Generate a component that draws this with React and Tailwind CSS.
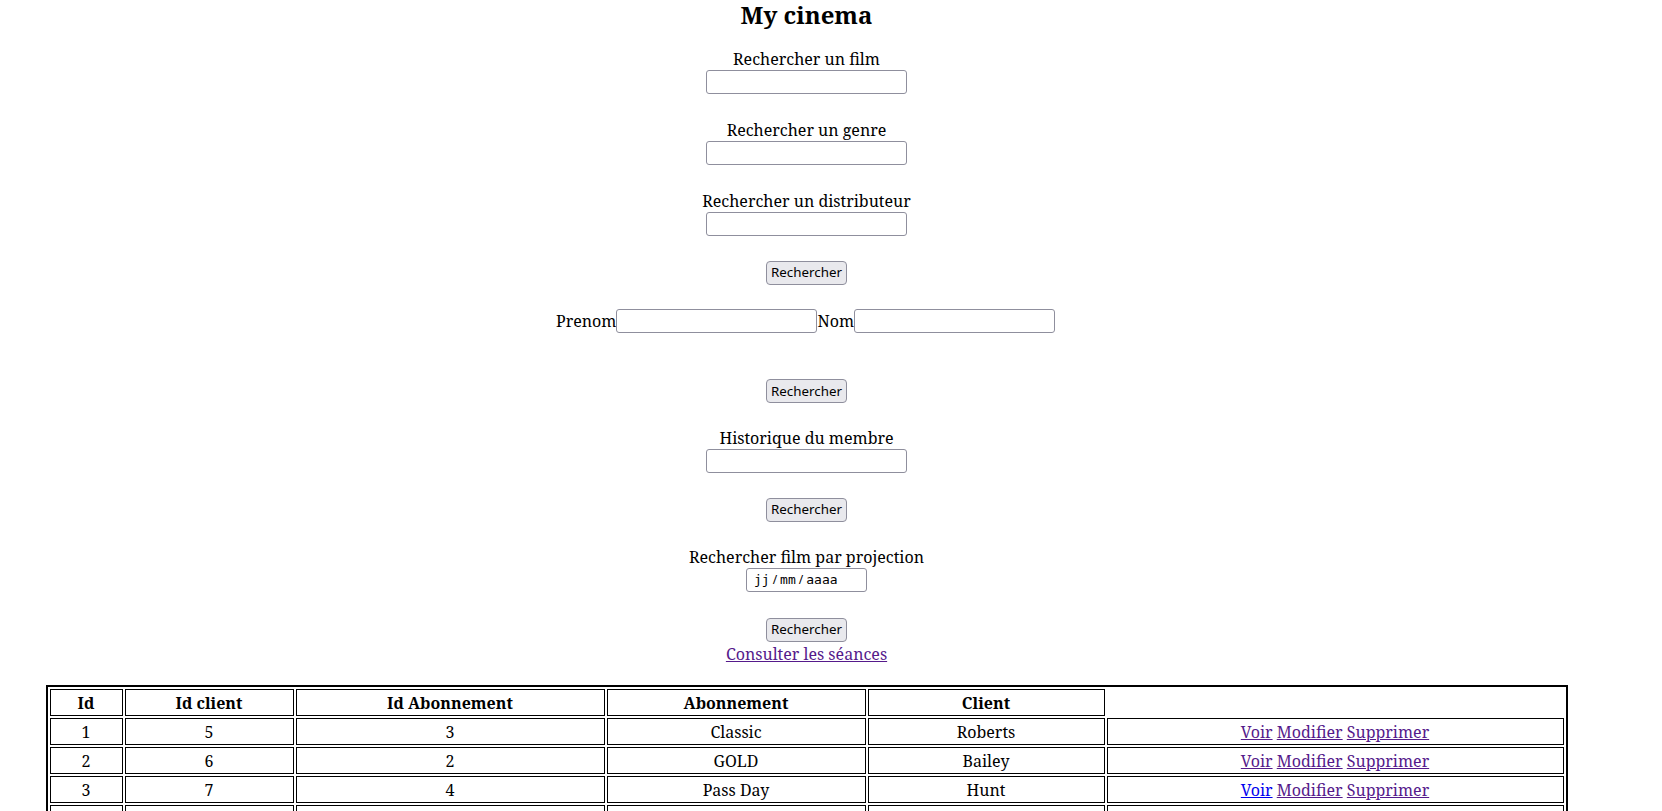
import React from "react";

const rows = [
    { id: 1, client: 5, abo: 3, name: "Classic", last: "Roberts", visited: true },
    { id: 2, client: 6, abo: 2, name: "GOLD", last: "Bailey", visited: true },
    { id: 3, client: 7, abo: 4, name: "Pass Day", last: "Hunt", visited: false },
    { id: 4, client: 8, abo: 1, name: "Classic", last: "Moore", visited: true },
    { id: 5, client: 9, abo: 3, name: "GOLD", last: "Lewis", visited: true },
];

const Field = () => (
    <input
        type="text"
        className="w-[201px] h-[24px] border border-[#8f8f9d] rounded-[3px] bg-white px-1 text-[13px] font-['Noto_Sans',sans-serif]"
    />
);

const Btn = () => (
    <button className="h-[24px] w-[81px] border border-[#8f8f9d] rounded-[4px] bg-[#e9e9ed] text-[13.33px] text-black font-['Noto_Sans',sans-serif] leading-none">
        Rechercher
    </button>
);

const Label = ({ children }) => (
    <div className="text-[16px] leading-[22px] h-[22px]">{children}</div>
);

const App = () => {
    const td = "border border-black text-center px-[1px] h-[27px] leading-[22px] pt-[2px]";
    const th = "border border-black text-center font-bold px-[1px] h-[27px] leading-[22px] pt-[1px]";

    return (
        <div className="h-screen overflow-hidden bg-white text-black font-['Noto_Serif','DejaVu_Serif',serif]">
            <div className="w-[1613px] flex flex-col items-center">
                <h2 className="text-[24px] font-bold leading-[30px]">My cinema</h2>

                {/* film / genre / distributeur */}
                <div className="mt-[18px] flex flex-col items-center">
                    <Label>Rechercher un film</Label>
                    <Field />
                </div>
                <div className="mt-[25px] flex flex-col items-center">
                    <Label>Rechercher un genre</Label>
                    <Field />
                </div>
                <div className="mt-[25px] flex flex-col items-center">
                    <Label>Rechercher un distributeur</Label>
                    <Field />
                </div>
                <div className="mt-[23px]">
                    <Btn />
                </div>

                {/* membre */}
                <div className="mt-[24px] flex items-center h-[25px] text-[16px] pr-[2px]">
                    <span>Prenom</span>
                    <Field />
                    <span>Nom</span>
                    <Field />
                </div>
                <div className="mt-[44px]">
                    <Btn />
                </div>

                <div className="mt-[24px] flex flex-col items-center">
                    <Label>Historique du membre</Label>
                    <Field />
                </div>
                <div className="mt-[23px]">
                    <Btn />
                </div>

                <div className="mt-[24px] flex flex-col items-center">
                    <Label>Rechercher film par projection</Label>
                    <div className="w-[121px] h-[24px] border border-[#8f8f9d] rounded-[3px] flex items-center pl-[7px] text-[13px]">
                        <span className="font-['DejaVu_Sans_Mono',monospace]">jj</span>
                        <span className="font-['Noto_Sans',sans-serif] text-[12px] px-[3px]">/</span>
                        <span className="font-['DejaVu_Sans_Mono',monospace]">mm</span>
                        <span className="font-['Noto_Sans',sans-serif] text-[12px] px-[3px]">/</span>
                        <span className="font-['DejaVu_Sans_Mono',monospace]">aaaa</span>
                    </div>
                </div>
                <div className="mt-[24px]">
                    <Btn />
                </div>
                <a href="#" className="mt-[1px] text-[16px] leading-[22px] text-[#551a8b] underline">
                    Consulter les séances
                </a>

                {/* table */}
                <table className="mt-[20px] w-[1522px] border-2 border-black border-separate border-spacing-[2px] text-[16px]">
                    <thead>
                        <tr>
                            <th className={`${th} w-[73px]`}>Id</th>
                            <th className={`${th} w-[169px]`}>Id client</th>
                            <th className={`${th} w-[309px]`}>Id Abonnement</th>
                            <th className={`${th} w-[259px]`}>Abonnement</th>
                            <th className={`${th} w-[237px]`}>Client</th>
                        </tr>
                    </thead>
                    <tbody>
                        {rows.map((r) => (
                            <tr key={r.id}>
                                <td className={td}>{r.id}</td>
                                <td className={td}>{r.client}</td>
                                <td className={td}>{r.abo}</td>
                                <td className={td}>{r.name}</td>
                                <td className={td}>{r.last}</td>
                                <td className={td}>
                                    <a href="#" className={`underline ${r.visited ? "text-[#551a8b]" : "text-[#0000ee]"}`}>Voir</a>{" "}
                                    <a href="#" className="underline text-[#551a8b]">Modifier</a>{" "}
                                    <a href="#" className="underline text-[#551a8b]">Supprimer</a>
                                </td>
                            </tr>
                        ))}
                    </tbody>
                </table>
            </div>
        </div>
    );
};

export default App;
